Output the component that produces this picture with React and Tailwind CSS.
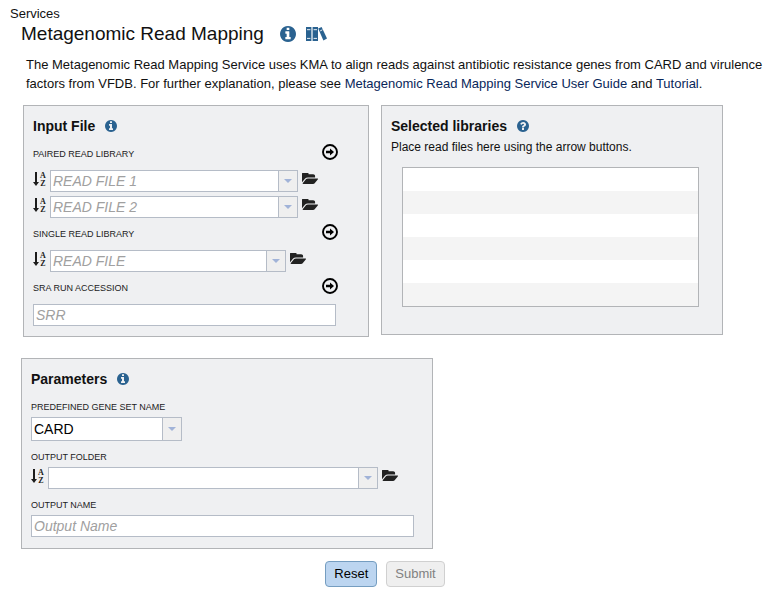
const FONT = "font-['Liberation_Sans',Arial,sans-serif]";

const CIRCLE = "m640 416q0 209-103 385.5t-279.5 279.5-385.5 103-385.5-103-279.5-279.5-103-385.5 103-385.5 279.5-279.5 385.5-103 385.5 103 279.5 279.5 103 385.5z";

function InfoIcon({ className }) {
  return (
    <svg aria-hidden="true" viewBox="0 128 1536 1536" fill="currentColor" className={className}>
      <path d={`M1024 1376v-160q0-14-9-23t-23-9h-96v-512q0-14-9-23t-23-9h-320q-14 0-23 9t-9 23v160q0 14 9 23t23 9h96v320h-96q-14 0-23 9t-9 23v160q0 14 9 23t23 9h448q14 0 23-9t9-23zm-128-896v-160q0-14-9-23t-23-9h-192q-14 0-23 9t-9 23v160q0 14 9 23t23 9h192q14 0 23-9t9-23z${CIRCLE}`} />
    </svg>
  );
}

function QuestionIcon({ className }) {
  return (
    <svg aria-hidden="true" viewBox="0 128 1536 1536" fill="currentColor" className={className}>
      <path d="M896 1376v-192q0-14-9-23t-23-9h-192q-14 0-23 9t-9 23v192q0 14 9 23t23 9h192q14 0 23-9t9-23zm256-672q0-88-55.5-163t-138.5-116-170-41q-243 0-371 213-15 24 8 42l132 100q7 6 19 6 16 0 25-12 53-68 86-92 34-24 86-24 48 0 85.5 26t37.5 59q0 38-20 61t-68 45q-63 28-115.5 86.5t-52.5 125.5v36q0 14 9 23t23 9h192q14 0 23-9t9-23q0-19 21.5-49.5t54.5-49.5q32-18 49-28.5t46-35 44.5-48 28-60.5 12.5-81zm384 192q0 209-103 385.5t-279.5 279.5-385.5 103-385.5-103-279.5-279.5-103-385.5 103-385.5 279.5-279.5 385.5-103 385.5 103 279.5 279.5 103 385.5z" />
    </svg>
  );
}

function FolderIcon() {
  return (
    <svg aria-hidden="true" viewBox="0 256 1879 1280" fill="currentColor" className="h-[11px] w-4">
      <path d="M1879 952q0 31-31 66l-336 396q-43 51-120.5 86.5t-143.5 35.5h-1088q-34 0-60.5-13t-26.5-43q0-31 31-66l336-396q43-51 120.5-86.5t143.5-35.5h1088q34 0 60.5 13t26.5 43zm-343-344v160h-832q-94 0-197 47.5t-164 119.5l-337 396-5 6q0-4-.5-12.5t-.5-12.5v-960q0-92 66-158t158-66h320q92 0 158 66t66 158v32h544q92 0 158 66t66 158z" />
    </svg>
  );
}

function BooksIcon() {
  return (
    <svg aria-hidden="true" viewBox="0 0 21 14" fill="currentColor" className="h-[14px] w-[21px]">
      <path d="M0 0H5.4V14H0Z" />
      <path d="M6.6 0H12V14H6.6Z" />
      <path d="M12.2 1.6L15.6 0L21 11.6L17.4 13.6Z" />
      <path d="M1 2.7H4.4M7.6 2.7H11M1 11.4H4.4M7.6 11.4H11M14.2 3.9L16.4 2.8" stroke="#fff" strokeWidth="0.9" fill="none" />
    </svg>
  );
}

function SortIcon() {
  return (
    <svg aria-hidden="true" viewBox="0 0 14 16" className="h-4 w-[14px] shrink-0 text-[#1c1c1c]">
      <path d="M3 1V12" stroke="currentColor" strokeWidth="2" fill="none" />
      <path d="M0 11H6L3 15Z" fill="currentColor" />
      <text x="10" y="7" textAnchor="middle" fontSize="8" fontWeight="700" fontFamily="Liberation Serif, serif" fill="currentColor">A</text>
      <text x="10" y="15" textAnchor="middle" fontSize="8" fontWeight="700" fontFamily="Liberation Serif, serif" fill="currentColor">Z</text>
    </svg>
  );
}

function Caret() {
  return (
    <svg aria-hidden="true" viewBox="0 0 8 4" className="h-1 w-2">
      <path d="M0 0H8L4 4Z" fill="#a1b3d8" />
    </svg>
  );
}

function ArrowButton({ label }) {
  return (
    <button type="button" aria-label={label} className="pb-1 text-black">
      <svg aria-hidden="true" viewBox="0 0 16 16" className="size-4">
        <circle cx="8" cy="8" r="7" fill="none" stroke="currentColor" strokeWidth="1.9" />
        <path d="M4 6.8H8V4.6L12 8L8 11.4V9.2H4Z" fill="currentColor" />
      </svg>
    </button>
  );
}

function Panel({ title, help, className, children }) {
  const Icon = help ? QuestionIcon : InfoIcon;
  return (
    <section className={`border border-[#b2b4b7] bg-[#eff0f2] pt-2 pl-[9px] ${className}`}>
      <div className="flex h-6 items-center gap-[10px]">
        <h2 className="text-sm font-bold text-[#111]">{title}</h2>
        <button type="button" aria-label={`About ${title}`} className="text-[#2a6290]">
          <Icon className="size-3" />
        </button>
      </div>
      {children}
    </section>
  );
}

function LibraryHeader({ htmlFor, children }) {
  return (
    <div className="flex h-8 items-center justify-between">
      <label htmlFor={htmlFor} className="pt-[2px] text-[9px] text-[#222]">{children}</label>
      <ArrowButton label={`Add ${children}`} />
    </div>
  );
}

function FieldLabel({ htmlFor, children }) {
  return (
    <label htmlFor={htmlFor} className="mt-[5px] block pt-px text-[9px] leading-5 text-[#222]">{children}</label>
  );
}

const INPUT =
  "h-[22px] w-full min-w-0 border border-[#b5bcc7] bg-white px-[2px] text-sm leading-5 text-black placeholder:italic placeholder:text-[#a0a0a0] placeholder:opacity-100";

function FileCombo({ id, placeholder, label, className }) {
  return (
    <div className={`flex items-center ${className}`}>
      <button type="button" aria-label="Sort" className="mr-[3px] pb-1">
        <SortIcon />
      </button>
      <div className="flex min-w-0 flex-1">
        <input id={id} type="text" role="combobox" aria-expanded="false" aria-label={label} placeholder={placeholder} className={INPUT} />
        <button type="button" aria-label="Open list" className="flex w-[19px] shrink-0 items-center justify-center border border-l-0 border-[#b5bcc7] bg-[#efefef]">
          <Caret />
        </button>
      </div>
      <button type="button" aria-label="Browse" className="ml-1 pb-[6px] text-[#222]">
        <FolderIcon />
      </button>
    </div>
  );
}

export default function App() {
  return (
    <main className={`${FONT} bg-white pt-1 text-[13px] text-[#111]`}>
      <header className="pr-1 pl-[10px]">
        <div className="leading-5">Services</div>
        <div className="flex h-5 items-center gap-4 pl-[11px]">
          <h1 className="text-[19px] leading-5">Metagenomic Read Mapping</h1>
          <div className="flex items-center gap-[10px] text-[#2a6290]">
            <button type="button" aria-label="About this service">
              <InfoIcon className="size-4" />
            </button>
            <button type="button" aria-label="Tutorials">
              <BooksIcon />
            </button>
          </div>
        </div>
        <p className="mt-[11px] pl-4 leading-[19px]">
          The Metagenomic Read Mapping Service uses KMA to align reads against antibiotic resistance genes from CARD and virulence
          factors from VFDB. For further explanation, please see{" "}
          <a href="#guide" className="text-[#09275a]">Metagenomic Read Mapping Service User Guide</a> and{" "}
          <a href="#tutorial" className="text-[#09275a]">Tutorial</a>.
        </p>
      </header>

      <form onSubmit={(e) => e.preventDefault()}>
        <div className="mt-3 ml-[23px] grid max-w-[700px] grid-cols-[346fr_342fr] items-start gap-3">
          <Panel title="Input File" className="min-w-0 pr-[30px] pb-[10px]">
            <LibraryHeader htmlFor="read1">PAIRED READ LIBRARY</LibraryHeader>
            <div className="flex flex-col gap-1">
              <FileCombo id="read1" placeholder="READ FILE 1" className="pr-5" />
              <FileCombo id="read2" label="Read file 2" placeholder="READ FILE 2" className="pr-5" />
            </div>
            <LibraryHeader htmlFor="single">SINGLE READ LIBRARY</LibraryHeader>
            <FileCombo id="single" placeholder="READ FILE" className="pr-8" />
            <LibraryHeader htmlFor="srr">SRA RUN ACCESSION</LibraryHeader>
            <div className="flex pr-[2px]">
              <input id="srr" type="text" placeholder="SRR" className={INPUT} />
            </div>
          </Panel>

          <Panel title="Selected libraries" help className="min-w-0 pr-[23px] pb-[27px]">
            <p className="text-xs leading-[18px]">Place read files here using the arrow buttons.</p>
            <div className="mt-[11px] ml-[11px] border border-[#b2b4b7]">
              <table aria-label="Selected libraries" className="w-full">
                <tbody>
                  {[1, 2, 3, 4, 5, 6].map((row) => (
                    <tr key={row} className="h-[23px] bg-white even:bg-[#f4f4f4]">
                      <td />
                    </tr>
                  ))}
                </tbody>
              </table>
            </div>
          </Panel>
        </div>

        <Panel title="Parameters" className="mt-[21px] ml-[21px] max-w-[412px] pr-[18px] pb-[11px]">
          <FieldLabel htmlFor="gene">PREDEFINED GENE SET NAME</FieldLabel>
          <div className="relative w-[151px]">
            <select id="gene" defaultValue="CARD" className="block h-6 w-full appearance-none border border-[#b5bcc7] bg-white px-[2px] text-sm leading-5 text-black">
              <option>CARD</option>
              <option>VFDB</option>
            </select>
            <span className="pointer-events-none absolute inset-y-0 right-0 flex w-5 items-center justify-center border border-[#b5bcc7] bg-[#efefef]">
              <Caret />
            </span>
          </div>
          <FieldLabel htmlFor="folder">OUTPUT FOLDER</FieldLabel>
          <FileCombo id="folder" className="pr-4" />
          <FieldLabel htmlFor="name">OUTPUT NAME</FieldLabel>
          <input id="name" type="text" placeholder="Output Name" className={`${INPUT} block`} />
        </Panel>

        <div className="mt-3 flex justify-center gap-[9px]">
          <button type="reset" className="h-[26px] rounded border border-[#759dc0] bg-[#bcd5f0] px-2 text-[13px] text-black">Reset</button>
          <button type="submit" disabled className="h-[26px] rounded border border-[#d0d0d0] bg-[#efefef] px-2 text-[13px] text-[#818181]">Submit</button>
        </div>
      </form>
    </main>
  );
}
